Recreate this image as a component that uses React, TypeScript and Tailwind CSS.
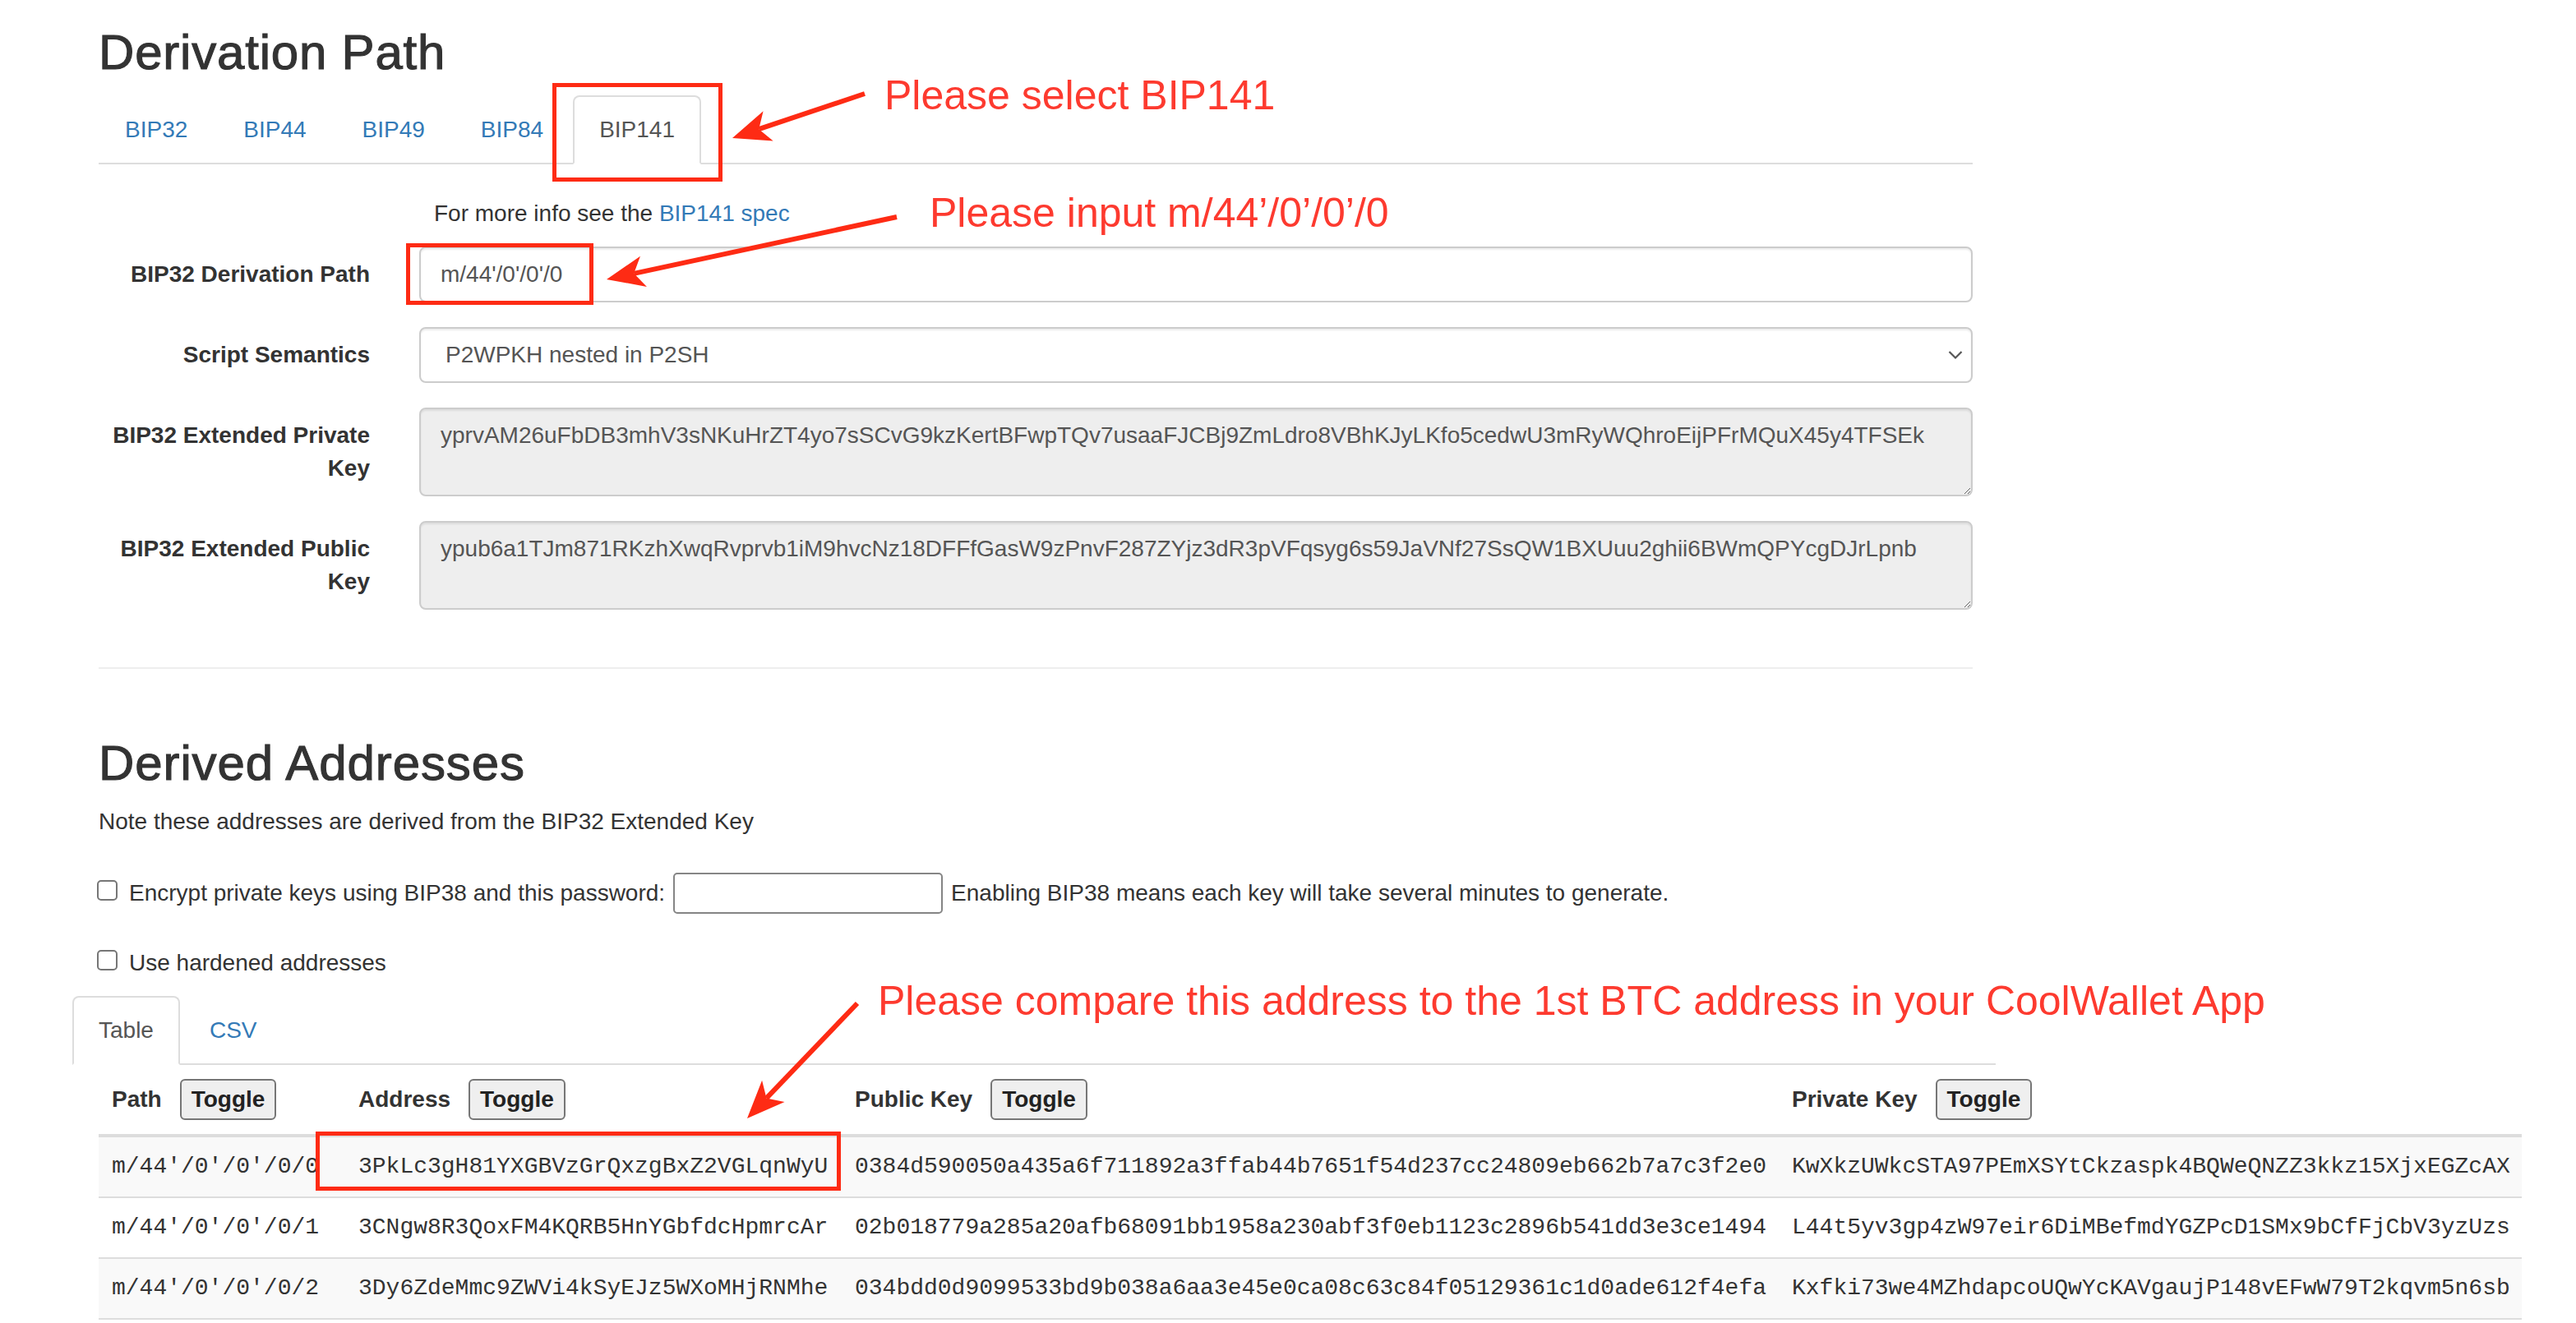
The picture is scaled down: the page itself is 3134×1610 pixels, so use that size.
import React from "react";

const rows = [
  {
    path: "m/44'/0'/0'/0/0",
    address: "3PkLc3gH81YXGBVzGrQxzgBxZ2VGLqnWyU",
    pub: "0384d590050a435a6f711892a3ffab44b7651f54d237cc24809eb662b7a7c3f2e0",
    priv: "KwXkzUWkcSTA97PEmXSYtCkzaspk4BQWeQNZZ3kkz15XjxEGZcAX",
  },
  {
    path: "m/44'/0'/0'/0/1",
    address: "3CNgw8R3QoxFM4KQRB5HnYGbfdcHpmrcAr",
    pub: "02b018779a285a20afb68091bb1958a230abf3f0eb1123c2896b541dd3e3ce1494",
    priv: "L44t5yv3gp4zW97eir6DiMBefmdYGZPcD1SMx9bCfFjCbV3yzUzs",
  },
  {
    path: "m/44'/0'/0'/0/2",
    address: "3Dy6ZdeMmc9ZWVi4kSyEJz5WXoMHjRNMhe",
    pub: "034bdd0d9099533bd9b038a6aa3e45e0ca08c63c84f05129361c1d0ade612f4efa",
    priv: "Kxfki73we4MZhdapcoUQwYcKAVgaujP148vEFwW79T2kqvm5n6sb",
  },
];

const xprv =
  "yprvAM26uFbDB3mhV3sNKuHrZT4yo7sSCvG9kzKertBFwpTQv7usaaFJCBj9ZmLdro8VBhKJyLKfo5cedwU3mRyWQhroEijPFrMQuX45y4TFSEk";
const xpub =
  "ypub6a1TJm871RKzhXwqRvprvb1iM9hvcNz18DFFfGasW9zPnvF287ZYjz3dR3pVFqsyg6s59JaVNf27SsQW1BXUuu2ghii6BWmQPYcgDJrLpnb";

const RED = "#fe2b14";

function Arrow({ x1, y1, x2, y2 }: { x1: number; y1: number; x2: number; y2: number }) {
  const a = Math.atan2(y2 - y1, x2 - x1);
  const cos = Math.cos(a);
  const sin = Math.sin(a);
  const back = 46;
  const notch = 34;
  const w = 19;
  const bx = x2 - back * cos;
  const by = y2 - back * sin;
  const nx = x2 - notch * cos;
  const ny = y2 - notch * sin;
  const pts = `${x2},${y2} ${bx - sin * w},${by + cos * w} ${nx},${ny} ${bx + sin * w},${by - cos * w}`;
  return (
    <g>
      <line x1={x1} y1={y1} x2={nx} y2={ny} stroke={RED} strokeWidth={6} />
      <polygon points={pts} fill={RED} />
    </g>
  );
}

function FormRow({ label, children }: { label: React.ReactNode; children: React.ReactNode }) {
  return (
    <div className="mb-[30px] flex gap-[60px]">
      <label className="w-[330px] shrink-0 pt-[14px] text-right font-bold">{label}</label>
      <div className="flex-1">{children}</div>
    </div>
  );
}

function ToggleButton() {
  return (
    <button className="h-[50px] rounded-[6px] border-2 border-[#767676] bg-[#efefef] px-[12px] text-[28px] font-bold leading-[40px] text-[#222]">
      Toggle
    </button>
  );
}

function Checkbox() {
  return <span className="inline-block h-[25px] w-[25px] shrink-0 rounded-[5px] border-2 border-[#767676] bg-white" />;
}

export default function App() {
  return (
    <div className="relative h-[1610px] w-[3134px] overflow-hidden bg-white font-['Liberation_Sans',Arial,sans-serif] text-[28px] leading-[40px] text-[#333]">
      <div className="pl-[120px]">
        <div className="w-[2280px]">
          <h2 className="mt-[31px] mb-[19px] text-[60px] font-medium leading-[66px] tracking-[0.8px] [-webkit-text-stroke:1.1px_#333]">
            Derivation Path
          </h2>

          <ul className="flex border-b-2 border-[#ddd]">
            {["BIP32", "BIP44", "BIP49", "BIP84"].map((t) => (
              <li key={t} className="-mb-[2px] mr-[4px]">
                <a className="block border-2 border-transparent px-[30px] py-[20px] text-[#337ab7]">{t}</a>
              </li>
            ))}
            <li className="-mb-[2px]">
              <a className="block rounded-t-[8px] border-2 border-[#ddd] border-b-white bg-white px-[30px] py-[20px] text-[#555]">
                BIP141
              </a>
            </li>
          </ul>

          <p className="mt-[40px] mb-[20px] pl-[408px]">
            For more info see the <a className="text-[#337ab7]">BIP141 spec</a>
          </p>

          <FormRow label="BIP32 Derivation Path">
            <input
              readOnly
              value="m/44'/0'/0'/0"
              className="h-[68px] w-full rounded-[8px] border-2 border-[#ccc] px-[24px] text-[28px] text-[#555] shadow-[inset_0_2px_2px_rgba(0,0,0,0.075)] outline-none"
            />
          </FormRow>

          <FormRow label="Script Semantics">
            <div className="relative">
              <select className="h-[68px] w-full appearance-none rounded-[8px] border-2 border-[#ccc] bg-white pl-[30px] text-[28px] text-[#555] shadow-[inset_0_2px_2px_rgba(0,0,0,0.075)] outline-none">
                <option>P2WPKH nested in P2SH</option>
              </select>
              <svg className="pointer-events-none absolute right-[12px] top-[28px]" width="18" height="12" viewBox="0 0 18 12">
                <path d="M1.5 2 L9 9.5 L16.5 2" fill="none" stroke="#555" strokeWidth="2.2" />
              </svg>
            </div>
          </FormRow>

          <FormRow label="BIP32 Extended Private Key">
            <textarea
              readOnly
              value={xprv}
              className="block h-[108px] w-full rounded-[8px] border-2 border-[#ccc] bg-[#eee] px-[24px] py-[12px] text-[28px] leading-[40px] text-[#555] shadow-[inset_0_2px_2px_rgba(0,0,0,0.075)] outline-none"
            />
          </FormRow>

          <FormRow label="BIP32 Extended Public Key">
            <textarea
              readOnly
              value={xpub}
              className="block h-[108px] w-full rounded-[8px] border-2 border-[#ccc] bg-[#eee] px-[24px] py-[12px] text-[28px] leading-[40px] text-[#555] shadow-[inset_0_2px_2px_rgba(0,0,0,0.075)] outline-none"
            />
          </FormRow>

          <hr className="mt-[70px] border-t-2 border-[#eee]" />

          <h2 className="mt-[82px] mb-[18px] text-[60px] font-medium leading-[66px] tracking-[0.9px] [-webkit-text-stroke:1.1px_#333]">
            Derived Addresses
          </h2>
          <p>Note these addresses are derived from the BIP32 Extended Key</p>

          <div className="mt-[42px] flex h-[50px] items-center">
            <span className="-ml-[2px]">
              <Checkbox />
            </span>
            <span className="ml-[14px]">Encrypt private keys using BIP38 and this password:</span>
            <span className="ml-[10px] inline-block h-[50px] w-[328px] rounded-[5px] border-2 border-[#858585] bg-white" />
            <span className="ml-[10px]">Enabling BIP38 means each key will take several minutes to generate.</span>
          </div>

          <div className="mt-[40px] flex h-[40px] items-center">
            <span className="-ml-[2px]">
              <Checkbox />
            </span>
            <span className="ml-[14px]">Use hardened addresses</span>
          </div>

          <ul className="mt-[20px] -ml-[32px] flex w-[2340px] border-b-2 border-[#ddd]">
            <li className="-mb-[2px] mr-[4px]">
              <a className="block rounded-t-[8px] border-2 border-[#ddd] border-b-white bg-white px-[30px] py-[20px] text-[#555]">
                Table
              </a>
            </li>
            <li className="-mb-[2px]">
              <a className="block border-2 border-transparent px-[30px] py-[20px] text-[#337ab7]">CSV</a>
            </li>
          </ul>
        </div>

        <table className="w-[2948px] table-fixed border-collapse">
          <thead>
            <tr className="border-b-4 border-[#ddd]">
              {[
                { label: "Path", w: "w-[300px]" },
                { label: "Address", w: "w-[604px]" },
                { label: "Public Key", w: "w-[1140px]" },
                { label: "Private Key", w: "w-[904px]" },
              ].map((h) => (
                <th key={h.label} className={`${h.w} px-[16px] py-[17px] text-left align-bottom font-bold`}>
                  <div className="flex items-center gap-[22px]">
                    <span>{h.label}</span>
                    <ToggleButton />
                  </div>
                </th>
              ))}
            </tr>
          </thead>
          <tbody className="font-['Liberation_Mono','Courier_New',monospace]">
            {rows.map((r, i) => (
              <tr key={r.path} className={`border-b-2 border-[#ddd] ${i % 2 === 0 ? "bg-[#f9f9f9]" : "bg-white"}`}>
                <td className="whitespace-nowrap px-[16px] py-[16px]">{r.path}</td>
                <td className="whitespace-nowrap px-[16px] py-[16px]">{r.address}</td>
                <td className="whitespace-nowrap px-[16px] py-[16px]">{r.pub}</td>
                <td className="whitespace-nowrap px-[16px] py-[16px]">{r.priv}</td>
              </tr>
            ))}
          </tbody>
        </table>
      </div>

      {/* annotations drawn over the screenshot */}
      <svg className="pointer-events-none absolute left-0 top-0" width="3134" height="1610">
        <rect x="674.5" y="103.5" width="202" height="115" fill="none" stroke={RED} strokeWidth="5" />
        <rect x="496.5" y="298.5" width="223" height="70" fill="none" stroke={RED} strokeWidth="5" />
        <rect x="386.5" y="1379.5" width="634" height="67" fill="none" stroke={RED} strokeWidth="5" />
        <Arrow x1={1052} y1={114} x2={891} y2={168} />
        <Arrow x1={1091} y1={264} x2={738} y2={340} />
        <Arrow x1={1043} y1={1221} x2={909} y2={1361} />
      </svg>
      <span className="pointer-events-none absolute left-[1076px] top-[91px] whitespace-nowrap text-[50px] leading-[50px] text-[#fd3a2f]">
        Please select BIP141
      </span>
      <span className="pointer-events-none absolute left-[1131px] top-[234px] whitespace-nowrap text-[50px] leading-[50px] text-[#fd3a2f]">
        Please input m/44’/0’/0’/0
      </span>
      <span className="pointer-events-none absolute left-[1068px] top-[1193px] whitespace-nowrap text-[50px] leading-[50px] text-[#fd3a2f]">
        Please compare this address to the 1st BTC address in your CoolWallet App
      </span>
    </div>
  );
}
